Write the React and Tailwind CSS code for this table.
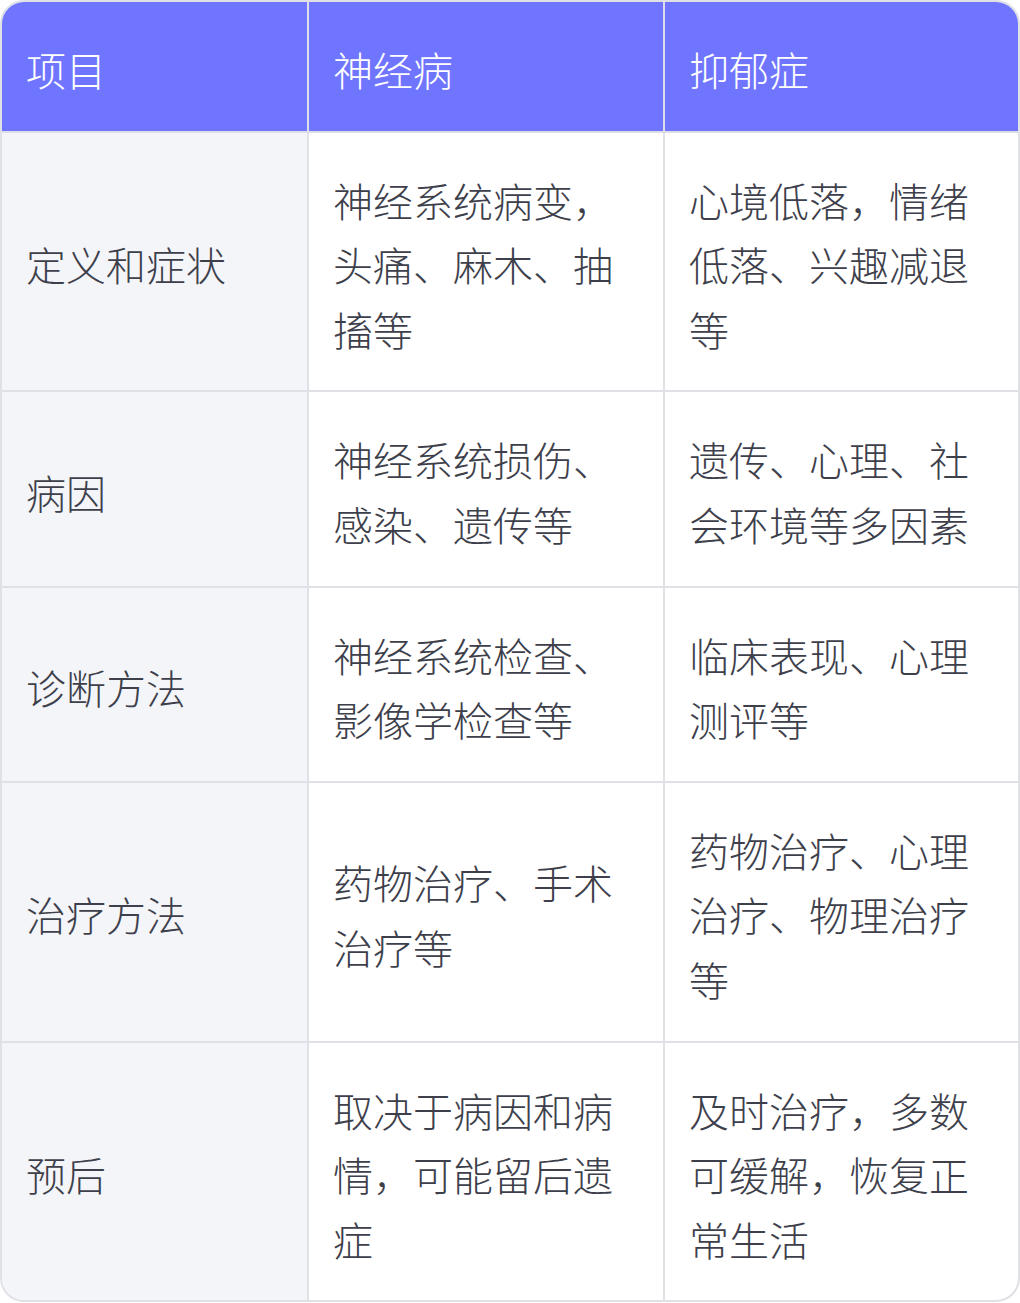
const rows = [
  ["定义和症状", "神经系统病变，头痛、麻木、抽搐等", "心境低落，情绪低落、兴趣减退等"],
  ["病因", "神经系统损伤、感染、遗传等", "遗传、心理、社会环境等多因素"],
  ["诊断方法", "神经系统检查、影像学检查等", "临床表现、心理测评等"],
  ["治疗方法", "药物治疗、手术治疗等", "药物治疗、心理治疗、物理治疗等"],
  ["预后", "取决于病因和病情，可能留后遗症", "及时治疗，多数可缓解，恢复正常生活"],
];

export default function App() {
  return (
    <div
      className="w-[1020px] bg-white"
      style={{ fontFamily: '"Noto Sans CJK SC", "Noto Sans", sans-serif' }}
    >
      <div className="overflow-hidden rounded-[24px] border-2 border-[#e0e1e6] text-[40px] font-light leading-[64.6px]">
        <div className="grid grid-cols-[307px_356px_1fr] bg-[#6f75ff] text-white">
          <div className="flex items-center border-b-2 border-r-2 border-[#dcdde6] px-6 pb-[29px] pt-[35px]">项目</div>
          <div className="flex items-center border-b-2 border-r-2 border-[#dcdde6] px-6 pb-[29px] pt-[35px]">神经病</div>
          <div className="flex items-center border-b-2 border-[#dcdde6] px-6 pb-[29px] pt-[35px]">抑郁症</div>
        </div>
        {rows.map((r, i) => (
          <div
            key={i}
            className={`grid grid-cols-[307px_356px_1fr] text-[#3d404b] ${
              i < rows.length - 1 ? "border-b-2 border-[#e0e1e6]" : ""
            }`}
          >
            <div className="flex items-center border-r-2 border-[#e0e1e6] bg-[#f4f5f9] px-6 pb-[29px] pt-[35px]">
              {r[0]}
            </div>
            <div className="flex items-center border-r-2 border-[#e0e1e6] px-6 pb-[29px] pt-[35px]">
              <p>{r[1]}</p>
            </div>
            <div className="flex items-center px-6 pb-[29px] pt-[35px]">
              <p>{r[2]}</p>
            </div>
          </div>
        ))}
      </div>
    </div>
  );
}
